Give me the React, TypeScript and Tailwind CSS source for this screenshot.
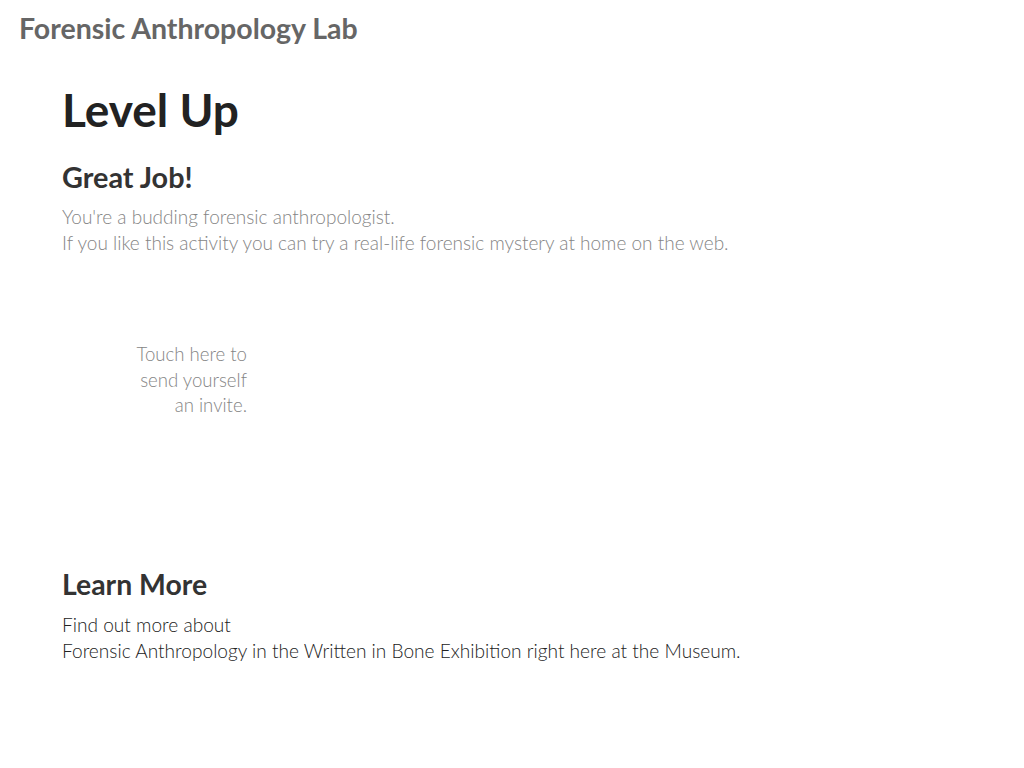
import React from "react";

export default function App() {
  return (
    <div className="w-[1024px] h-[768px] bg-white overflow-hidden" style={{ fontFamily: "Lato, 'Open Sans', sans-serif" }}>
      <div className="pl-[19px] pt-[10px]">
        <h1 className="text-[28.5px] leading-[36px] font-bold text-[#666666]">Forensic Anthropology Lab</h1>
      </div>
      <div className="pl-[62px] pt-[36px]">
        <h2 className="text-[46px] leading-[56px] font-bold text-[#222222]">Level Up</h2>
        <h3 className="mt-[22px] text-[28.8px] leading-[34px] font-bold text-[#333333]">Great Job!</h3>
        <div className="mt-[10px] text-[19px] leading-[26px] font-light text-[#858585]">
          <p>You're a budding forensic anthropologist.</p>
          <p>If you like this activity you can try a real-life forensic mystery at home on the web.</p>
        </div>
        <div className="mt-[86px] w-[185px] text-right text-[18.6px] leading-[25.5px] font-light text-[#858585]">
          <p>Touch here to</p>
          <p>send yourself</p>
          <p>an invite.</p>
        </div>
        <h3 className="mt-[148px] text-[28.4px] leading-[34px] font-bold text-[#333333]">Learn More</h3>
        <div className="mt-[11px] text-[19.1px] leading-[26px] font-light text-[#222222]">
          <p>Find out more about</p>
          <p>Forensic Anthropology in the Written in Bone Exhibition right here at the Museum.</p>
        </div>
      </div>
    </div>
  );
}
